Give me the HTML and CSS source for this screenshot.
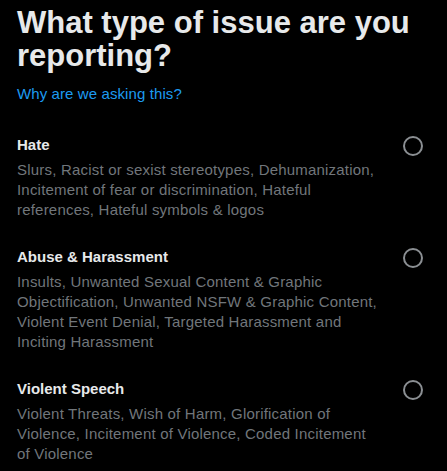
FILE: index.html
```html
<!DOCTYPE html>
<html lang="en">
<head>
  <meta charset="UTF-8">
  <title>Report</title>
  <link rel="stylesheet" href="styles.css">
</head>
<body>
  <div class="report">
    <h1 class="report-title">What type of issue are you reporting?</h1>
    <a class="why-link" href="#">Why are we asking this?</a>

    <div class="options">
      <label class="option">
        <div class="option-text">
          <div class="option-name">Hate</div>
          <div class="option-desc">Slurs, Racist or sexist stereotypes, Dehumanization, Incitement of fear or discrimination, Hateful references, Hateful symbols &amp; logos</div>
        </div>
        <span class="radio"></span>
      </label>

      <label class="option">
        <div class="option-text">
          <div class="option-name">Abuse &amp; Harassment</div>
          <div class="option-desc">Insults, Unwanted Sexual Content &amp; Graphic Objectification, Unwanted NSFW &amp; Graphic Content, Violent Event Denial, Targeted Harassment and Inciting Harassment</div>
        </div>
        <span class="radio"></span>
      </label>

      <label class="option">
        <div class="option-text">
          <div class="option-name">Violent Speech</div>
          <div class="option-desc">Violent Threats, Wish of Harm, Glorification of Violence, Incitement of Violence, Coded Incitement of Violence</div>
        </div>
        <span class="radio"></span>
      </label>
    </div>
  </div>
</body>
</html>
```

FILE: styles.css
```css
body {
  margin: 0;
  background: #000;
  color: #e7e9ea;
  font-family: 'Liberation Sans', Arial, sans-serif;
}

.report {
  padding: 6px 24px 0 17px;
}

.report-title {
  margin: 0;
  font-size: 31px;
  line-height: 33px;
  font-weight: bold;
  color: #e7e9ea;
}

.why-link {
  display: inline-block;
  margin-top: 12px;
  font-size: 15px;
  line-height: 20px;
  letter-spacing: 0.1px;
  color: #1d9bf0;
  text-decoration: none;
}

.options {
  margin-top: 18px;
}

.option {
  display: flex;
  justify-content: space-between;
  align-items: flex-start;
  padding: 13px 0 14px;
  cursor: pointer;
}

.option-name {
  font-size: 15px;
  line-height: 20px;
  font-weight: bold;
  color: #e7e9ea;
  margin-bottom: 5px;
}

.option-desc {
  font-size: 15px;
  line-height: 20px;
  letter-spacing: 0.2px;
  color: #71767b;
  max-width: 366px;
}

.radio {
  flex: none;
  width: 16px;
  height: 16px;
  border: 2px solid #8b8f93;
  border-radius: 50%;
  margin-top: 1px;
}
```
